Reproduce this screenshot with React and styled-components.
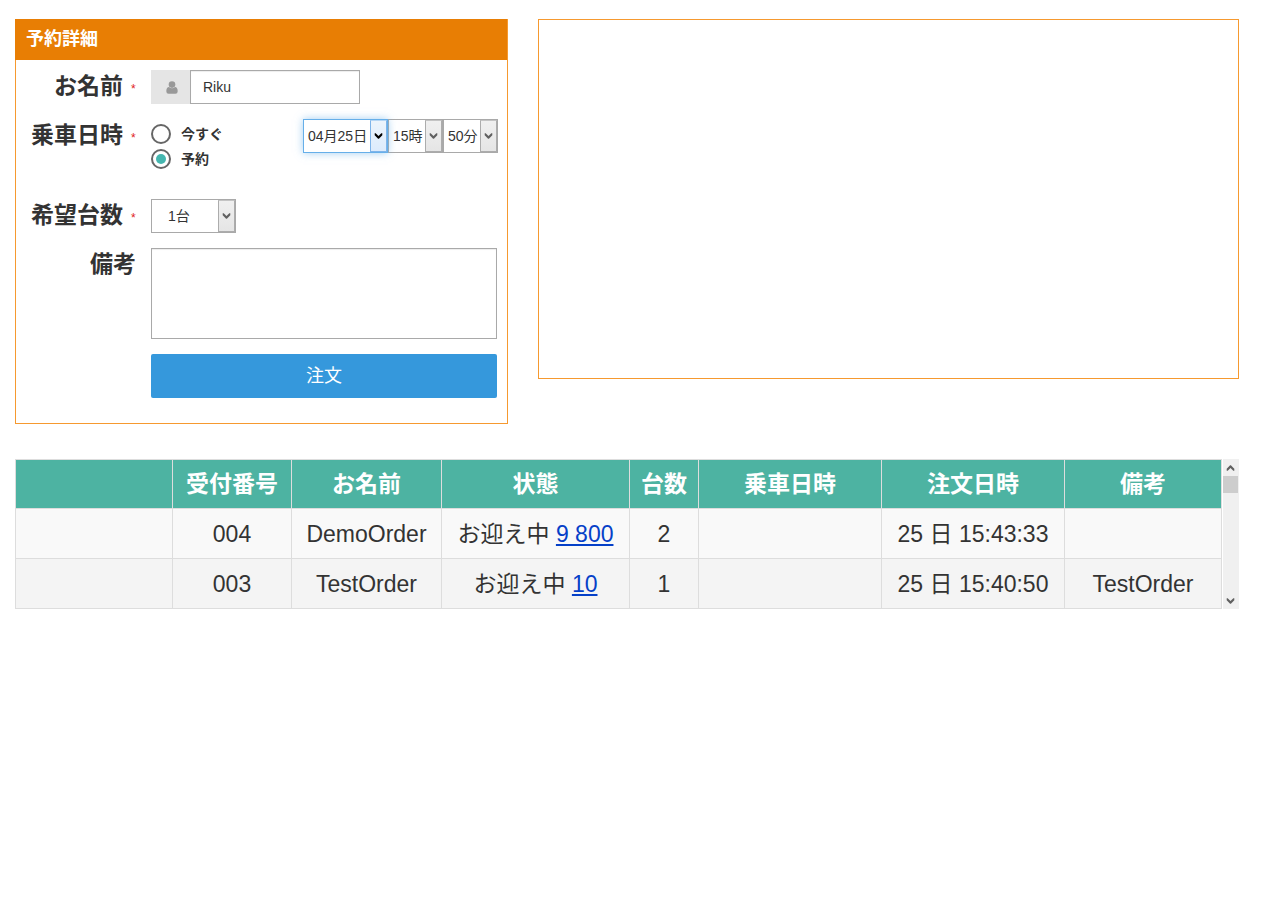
import React from "react";
import styled, { createGlobalStyle, css } from "styled-components";

const GlobalStyle = createGlobalStyle`
  * { box-sizing: border-box; }
  body {
    margin: 0;
    background: #fff;
    color: #333;
    font-family: "Liberation Sans", "Noto Sans CJK JP", sans-serif;
    font-size: 14px;
    line-height: 20px;
  }
`;

const Page = styled.main`
  padding: 19px 41px 0 15px;
`;

const TopRow = styled.div`
  display: flex;
  align-items: flex-start;
  gap: 30px;
  margin-bottom: 35px;
`;

const Panel = styled.section`
  width: 493px;
  height: 405px;
  border: 1px solid #f6992f;
`;

const PanelHeader = styled.h2`
  margin: -1px 0 10px -1px;
  width: 492px;
  height: 41px;
  padding: 0 11px;
  background: #e87e04;
  color: #fff;
  font-size: 18px;
  font-weight: 700;
  line-height: 40px;
`;

const MapPanel = styled.section`
  flex: 1;
  height: 360px;
  border: 1px solid #f6992f;
`;

const FormRow = styled.div`
  display: flex;
  align-items: flex-start;
  height: ${(p) => p.$height}px;
`;

const Label = styled.label`
  display: flex;
  justify-content: flex-end;
  align-items: flex-start;
  width: 120px;
  margin-right: 15px;
  font-size: 23px;
  font-weight: 700;
  line-height: 32px;
  white-space: nowrap;
`;

const Required = styled.span`
  width: 5px;
  margin-left: 8px;
  padding-top: 3px;
  color: #e02222;
  font-size: 12px;
  font-weight: 400;
`;

const Addon = styled.span`
  display: flex;
  align-items: center;
  justify-content: center;
  width: 39px;
  height: 34px;
  padding-left: 2px;
  background: #e5e5e5;
`;

const TextInput = styled.input`
  width: 170px;
  height: 34px;
  padding: 0 12px;
  border: 1px solid #a9a9a9;
  outline: none;
  box-shadow: inset 0 1px 1px rgba(0, 0, 0, 0.075);
  color: #333;
  font: inherit;
`;

const RadioList = styled.div`
  display: flex;
  flex-direction: column;
  gap: 5px;
  width: 152px;
  padding-top: 5px;
`;

const RadioOption = styled.div`
  display: flex;
  align-items: center;
  height: 20px;
  gap: 10px;
  font-weight: 700;
`;

const RadioMark = styled.span`
  display: flex;
  align-items: center;
  justify-content: center;
  width: 20px;
  height: 20px;
  border: 2px solid #666;
  border-radius: 50%;
  &::after {
    content: "";
    width: 10px;
    height: 10px;
    border-radius: 50%;
    background: ${(p) => (p.$checked ? "#45b6af" : "transparent")};
  }
`;

const SelectBox = styled.div`
  display: flex;
  align-items: stretch;
  width: ${(p) => p.$width}px;
  height: 34px;
  border: 1px solid #a9a9a9;
  background: #fff;
  white-space: nowrap;
  ${(p) =>
    p.$focused &&
    css`
      position: relative;
      border-color: #66afe9;
      box-shadow: 0 0 8px rgba(102, 175, 233, 0.6);
    `}
`;

const SelectValue = styled.span`
  flex: 1;
  padding-left: ${(p) => p.$indent}px;
  line-height: 32px;
`;

const SelectArrow = styled.span`
  display: flex;
  align-items: center;
  justify-content: center;
  width: 17px;
  border: 1px solid ${(p) => (p.$focused ? "#7eb4ea" : "#acacac")};
  border-top-color: ${(p) => (p.$focused ? "#b5d6f5" : "#c4c4c4")};
  background: ${(p) =>
    p.$focused
      ? "linear-gradient(#ecf4fc, #dcebfc)"
      : "linear-gradient(#f0f0f0, #e5e5e5)"};
  color: ${(p) => (p.$focused ? "#000" : "#606060")};
`;

const Notes = styled.textarea`
  display: block;
  width: 346px;
  height: 91px;
  border: 1px solid #a9a9a9;
  outline: none;
  resize: none;
  box-shadow: inset 0 1px 1px rgba(0, 0, 0, 0.075);
  font: inherit;
`;

const SubmitButton = styled.button`
  display: block;
  width: 346px;
  height: 44px;
  margin-left: 135px;
  padding: 0;
  border: 0;
  border-radius: 2px;
  background: #3598dc;
  color: #fff;
  font: inherit;
  font-size: 18px;
  line-height: 44px;
`;

const TableArea = styled.div`
  display: flex;
  gap: 1px;
  height: 150px;
`;

const Table = styled.table`
  width: 1207px;
  table-layout: fixed;
  border-spacing: 0;
  border-top: 1px solid #ddd;
  border-left: 1px solid #ddd;
  font-size: 23px;
  text-align: center;
`;

const Col = styled.col`
  width: ${(p) => p.$width}px;
`;

const HeaderCell = styled.th`
  height: 49px;
  padding: 0;
  border-right: 1px solid #ddd;
  border-bottom: 1px solid #ddd;
  background: #4db3a2;
  color: #fff;
  line-height: 46px;
`;

const BodyRow = styled.tr`
  background: #f9f9f9;
  &:nth-child(even) {
    background: #f4f4f4;
  }
`;

const Cell = styled.td`
  height: 50px;
  padding: 0;
  border-right: 1px solid #ddd;
  border-bottom: 1px solid #ddd;
  line-height: 48px;
  white-space: nowrap;
`;

const OrderLink = styled.a`
  color: #0540c8;
  text-decoration: underline;
  text-decoration-thickness: 2px;
  text-underline-offset: 2px;
`;

const ScrollBar = styled.div`
  display: flex;
  flex-direction: column;
  width: 16px;
  background: #f0f0f0;
`;

const ScrollArrow = styled.div`
  display: flex;
  align-items: center;
  justify-content: center;
  height: 17px;
  padding-right: 1px;
  color: #606060;
`;

const ScrollTrack = styled.div`
  flex: 1;
`;

const ScrollThumb = styled.div`
  width: 15px;
  height: 17px;
  background: #cdcdcd;
`;

const Chevron = ({ up }) => (
  <svg width="9" height="6" viewBox="0 0 9 6" fill="currentColor">
    <path
      d="M0.7 0.3 H1.7 L4.5 3 L7.3 0.3 H8.3 V2.3 L4.9 5.7 H4.1 L0.7 2.3 Z"
      transform={up ? "matrix(1 0 0 -1 0 6)" : undefined}
    />
  </svg>
);

const UserIcon = () => (
  <svg width="12" height="13" viewBox="0 0 12 13" fill="#999">
    <circle cx="6" cy="3.6" r="3.3" />
    <path d="M3 6 Q6 8.4 9 6 Q11.7 6.2 11.7 10.2 Q11.7 12.7 9.4 12.7 H2.6 Q0.3 12.7 0.3 10.2 Q0.3 6.2 3 6 Z" />
  </svg>
);

const Select = ({ value, width, indent = 4, focused }) => (
  <SelectBox $width={width} $focused={focused}>
    <SelectValue $indent={indent}>{value}</SelectValue>
    <SelectArrow $focused={focused}>
      <Chevron />
    </SelectArrow>
  </SelectBox>
);

const FieldLabel = ({ children, required }) => (
  <Label>
    {children}
    {required && <Required>*</Required>}
  </Label>
);

const columns = [
  ["", 157],
  ["受付番号", 119],
  ["お名前", 150],
  ["状態", 188],
  ["台数", 69],
  ["乗車日時", 183],
  ["注文日時", 183],
  ["備考", 157],
];

const orders = [
  { id: "004", name: "DemoOrder", car: "9 800", count: 2, time: "25 日 15:43:33", note: "" },
  { id: "003", name: "TestOrder", car: "10", count: 1, time: "25 日 15:40:50", note: "TestOrder" },
];

export default function App() {
  return (
    <Page>
      <GlobalStyle />
      <TopRow>
        <Panel>
          <PanelHeader>予約詳細</PanelHeader>
          <FormRow $height={49}>
            <FieldLabel required>お名前</FieldLabel>
            <Addon>
              <UserIcon />
            </Addon>
            <TextInput defaultValue="Riku" />
          </FormRow>
          <FormRow $height={80}>
            <FieldLabel required>乗車日時</FieldLabel>
            <RadioList>
              <RadioOption>
                <RadioMark />
                今すぐ
              </RadioOption>
              <RadioOption>
                <RadioMark $checked />
                予約
              </RadioOption>
            </RadioList>
            <Select value="04月25日" width={85} focused />
            <Select value="15時" width={55} />
            <Select value="50分" width={55} />
          </FormRow>
          <FormRow $height={49}>
            <FieldLabel required>希望台数</FieldLabel>
            <Select value="1台" width={85} indent={16} />
          </FormRow>
          <FormRow $height={106}>
            <FieldLabel>備考</FieldLabel>
            <Notes />
          </FormRow>
          <SubmitButton>注文</SubmitButton>
        </Panel>
        <MapPanel />
      </TopRow>
      <TableArea>
        <Table>
          <colgroup>
            {columns.map(([, width], i) => (
              <Col key={i} $width={width} />
            ))}
          </colgroup>
          <thead>
            <tr>
              {columns.map(([title], i) => (
                <HeaderCell key={i}>{title}</HeaderCell>
              ))}
            </tr>
          </thead>
          <tbody>
            {orders.map((o) => (
              <BodyRow key={o.id}>
                <Cell />
                <Cell>{o.id}</Cell>
                <Cell>{o.name}</Cell>
                <Cell>
                  お迎え中 <OrderLink>{o.car}</OrderLink>
                </Cell>
                <Cell>{o.count}</Cell>
                <Cell />
                <Cell>{o.time}</Cell>
                <Cell>{o.note}</Cell>
              </BodyRow>
            ))}
          </tbody>
        </Table>
        <ScrollBar>
          <ScrollArrow>
            <Chevron up />
          </ScrollArrow>
          <ScrollTrack>
            <ScrollThumb />
          </ScrollTrack>
          <ScrollArrow>
            <Chevron />
          </ScrollArrow>
        </ScrollBar>
      </TableArea>
    </Page>
  );
}
